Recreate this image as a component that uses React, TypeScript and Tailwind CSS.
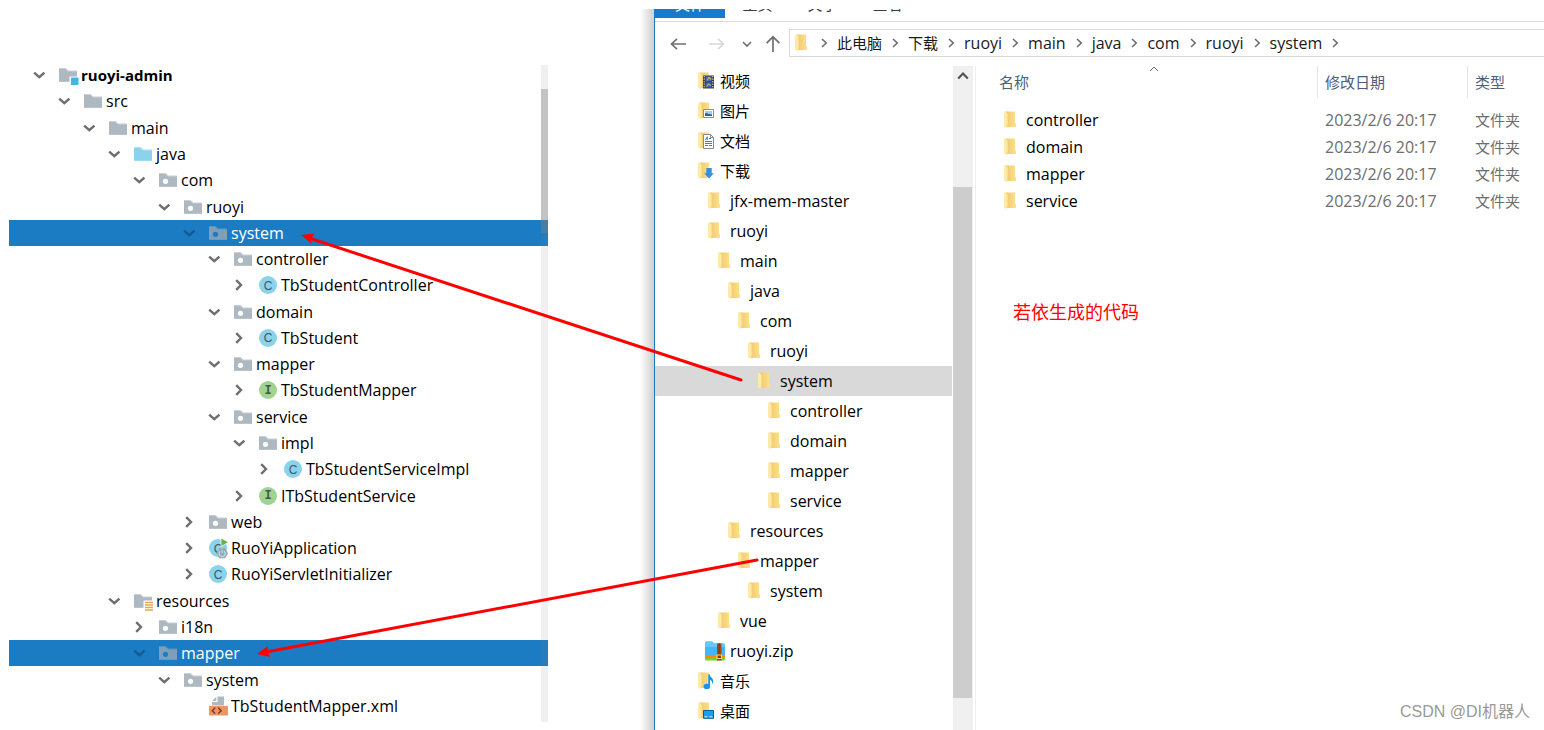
import React from "react";

type IdeIcon = "module" | "folder" | "source" | "package" | "class" | "interface" | "app" | "resources" | "xml";
type IdeNode = { label: string; depth: number; icon: IdeIcon; open?: boolean; leaf?: boolean; selected?: boolean };

const ideNodes: IdeNode[] = [
  { label: "ruoyi-admin", depth: 0, icon: "module", open: true },
  { label: "src", depth: 1, icon: "folder", open: true },
  { label: "main", depth: 2, icon: "folder", open: true },
  { label: "java", depth: 3, icon: "source", open: true },
  { label: "com", depth: 4, icon: "package", open: true },
  { label: "ruoyi", depth: 5, icon: "package", open: true },
  { label: "system", depth: 6, icon: "package", open: true, selected: true },
  { label: "controller", depth: 7, icon: "package", open: true },
  { label: "TbStudentController", depth: 8, icon: "class" },
  { label: "domain", depth: 7, icon: "package", open: true },
  { label: "TbStudent", depth: 8, icon: "class" },
  { label: "mapper", depth: 7, icon: "package", open: true },
  { label: "TbStudentMapper", depth: 8, icon: "interface" },
  { label: "service", depth: 7, icon: "package", open: true },
  { label: "impl", depth: 8, icon: "package", open: true },
  { label: "TbStudentServiceImpl", depth: 9, icon: "class" },
  { label: "ITbStudentService", depth: 8, icon: "interface" },
  { label: "web", depth: 6, icon: "package" },
  { label: "RuoYiApplication", depth: 6, icon: "app" },
  { label: "RuoYiServletInitializer", depth: 6, icon: "class" },
  { label: "resources", depth: 3, icon: "resources", open: true },
  { label: "i18n", depth: 4, icon: "package" },
  { label: "mapper", depth: 4, icon: "package", open: true, selected: true },
  { label: "system", depth: 5, icon: "package", open: true },
  { label: "TbStudentMapper.xml", depth: 6, icon: "xml", leaf: true },
];

type NavIcon = "folder" | "video" | "picture" | "document" | "download" | "zip" | "music" | "desktop";
type NavNode = { label: string; depth: number; icon: NavIcon; selected?: boolean };

const navNodes: NavNode[] = [
  { label: "视频", depth: 0, icon: "video" },
  { label: "图片", depth: 0, icon: "picture" },
  { label: "文档", depth: 0, icon: "document" },
  { label: "下载", depth: 0, icon: "download" },
  { label: "jfx-mem-master", depth: 1, icon: "folder" },
  { label: "ruoyi", depth: 1, icon: "folder" },
  { label: "main", depth: 2, icon: "folder" },
  { label: "java", depth: 3, icon: "folder" },
  { label: "com", depth: 4, icon: "folder" },
  { label: "ruoyi", depth: 5, icon: "folder" },
  { label: "system", depth: 6, icon: "folder", selected: true },
  { label: "controller", depth: 7, icon: "folder" },
  { label: "domain", depth: 7, icon: "folder" },
  { label: "mapper", depth: 7, icon: "folder" },
  { label: "service", depth: 7, icon: "folder" },
  { label: "resources", depth: 3, icon: "folder" },
  { label: "mapper", depth: 4, icon: "folder" },
  { label: "system", depth: 5, icon: "folder" },
  { label: "vue", depth: 2, icon: "folder" },
  { label: "ruoyi.zip", depth: 1, icon: "zip" },
  { label: "音乐", depth: 0, icon: "music" },
  { label: "桌面", depth: 0, icon: "desktop" },
];

const crumbs = ["此电脑", "下载", "ruoyi", "main", "java", "com", "ruoyi", "system"];
const files = ["controller", "domain", "mapper", "service"];

/** Latin labels are set one step larger than the Chinese ones. */
function labelSize(text: string) {
  return /^[\x00-\x7f]+$/.test(text) ? "text-base leading-5" : "text-[15px] leading-5";
}

function TreeChevron({ open, selected }: { open?: boolean; selected?: boolean }) {
  const color = selected ? "#125a91" : "#6e6e6e";
  return (
    <svg width="12" height="12" viewBox="0 0 12 12" fill="none" stroke={color} strokeWidth="2.4" aria-hidden="true">
      <path d={open ? "M1.2 3.6L6.3 8.2L11.4 3.6" : "M3.2 1.2L8 6L3.2 10.8"} />
    </svg>
  );
}

function IdeFolder({ icon, selected }: { icon: IdeIcon; selected?: boolean }) {
  const base = icon === "source" ? "#8bd3ec" : selected ? "#7f9fb8" : "#adb8c0";
  return (
    <svg width="20" height="20" viewBox="0 0 20 20" className="shrink-0" aria-hidden="true">
      <path d="M0 3H6.6L9.4 5.6H18V17H0Z" fill={base} opacity="0.65" />
      <path d="M0 4H6L8.8 6.4H18V16.4H0Z" fill={base} />
      {icon === "package" && <circle cx="6.5" cy="11.3" r="2.6" fill={selected ? "#1b7cc4" : "#ffffff"} />}
      {icon === "module" && (
        <>
          <path d="M10.5 11.5H20V20H10.5Z" fill="#ffffff" />
          <path d="M12 12.5H19.5V20H12Z" fill="#40b6e0" />
        </>
      )}
      {icon === "resources" && (
        <>
          <path d="M9.5 9.5H20V20H9.5Z" fill="#ffffff" />
          <path d="M11 11.5H19M11 14H19M11 16.5H19M11 19H19" stroke="#e5a84a" strokeWidth="1.5" />
        </>
      )}
    </svg>
  );
}

function TypeBadge({ icon }: { icon: IdeIcon }) {
  const tone = icon === "interface" ? "bg-[#a0d48d]" : "bg-[#8bd3ec]";
  return (
    <span className="relative flex w-5 shrink-0">
      <span
        className={`flex size-[18px] items-center justify-center rounded-full pt-px text-xs leading-none text-[#435560] ${tone} ${
          icon === "interface" ? "font-['Liberation_Mono',monospace] font-bold" : "font-['Liberation_Sans',sans-serif]"
        }`}
      >
        {icon === "interface" ? "I" : "C"}
      </span>
      {icon === "app" && (
        <svg className="absolute top-0 left-0 overflow-visible" width="20" height="20" viewBox="0 0 20 20" aria-hidden="true">
          <path d="M11.6 -1.6V8.2L19.6 3.2Z" fill="#ffffff" />
          <path d="M12.4 -0.6V7L18.8 3.2Z" fill="#62b543" />
          <path d="M10.3 9.2H16.1L19 14.2L16.1 19.2H10.3L7.4 14.2Z" fill="#9aa7b0" />
          <path d="M11.2 12.3A3 3 0 1 0 15.2 12.3M13.2 10.8V14" fill="none" stroke="#b9e2f1" strokeWidth="1.2" />
        </svg>
      )}
    </span>
  );
}

function XmlIcon() {
  return (
    <svg width="20" height="20" viewBox="0 0 20 20" className="shrink-0" aria-hidden="true">
      <path d="M8.5 0.5H15V9.5H3V6H8.5Z" fill="#adb8c0" />
      <path d="M7.3 0.8V5H3.1Z" fill="#adb8c0" />
      <path d="M0 10H19V19.5H0Z" fill="#f49362" />
      <path d="M6.2 11.8L3.2 14.7L6.2 17.6M9.2 11.8L12.2 14.7L9.2 17.6" fill="none" stroke="#5b3a29" strokeWidth="1.3" />
    </svg>
  );
}

function IdeTree() {
  return (
    <nav aria-label="Project" className="relative flex flex-1 pb-[11px] pt-[62px]">
      <ul className="grid flex-1 auto-rows-fr">
        {ideNodes.map((n, i) => (
          <li key={i} className="flex">
            <button
              type="button"
              className={`flex flex-1 items-center text-left text-base leading-5 ${
                n.selected ? "bg-[#1b7cc4] text-white" : "text-black"
              }`}
              style={{ paddingLeft: 24 + n.depth * 25 }}
            >
              <span className="mr-[14px] flex w-3 shrink-0">
                {!n.leaf && <TreeChevron open={n.open} selected={n.selected} />}
              </span>
              {n.icon === "class" || n.icon === "interface" || n.icon === "app" ? (
                <TypeBadge icon={n.icon} />
              ) : n.icon === "xml" ? (
                <XmlIcon />
              ) : (
                <IdeFolder icon={n.icon} selected={n.selected} />
              )}
              <span className={`ml-0.5 whitespace-nowrap ${n.icon === "module" ? "text-[15px] font-bold" : ""}`}>{n.label}</span>
            </button>
          </li>
        ))}
      </ul>
      <div className="absolute top-[65px] right-0 bottom-2 w-[7px] bg-[#808080]/12">
        <div className="mt-6 h-36 bg-[#808080]/40" />
      </div>
    </nav>
  );
}

function YellowFolder({ icon }: { icon: NavIcon }) {
  if (icon === "zip") {
    return (
      <svg width="20" height="20" viewBox="0 0 20 20" className="-mr-px -ml-[3px] shrink-0" aria-hidden="true">
        <path d="M0 2Q0 0.5 1.5 0.5H7L9.5 2.5H18.5Q20 2.5 20 4V15H0Z" fill="#49b3f5" />
        <path d="M0 2Q0 0.5 1.5 0.5H7L9.5 2.5H18.5Q20 2.5 20 4V6H0Z" fill="#64c8fa" />
        <path d="M0 14H20V17H0Z" fill="#ff8a00" />
        <path d="M0 17H20V18Q20 19.5 18.5 19.5H1.5Q0 19.5 0 18Z" fill="#79cf2b" />
        <path d="M12 2.5H16.5V19.5H12Z" fill="#a24b10" />
        <path d="M14.2 2.5V13" stroke="#613011" strokeWidth="1.3" strokeDasharray="1 1" />
        <path d="M12 14H16.5V17.5H12Z" fill="#7a3910" stroke="#ffd36b" strokeWidth="1.2" />
      </svg>
    );
  }
  return (
    <svg width="16" height="18" viewBox="0 0 16 18" className="shrink-0" aria-hidden="true">
      <defs>
        <linearGradient id="folderBack" x1="0" x2="1">
          <stop offset="0" stopColor="#ecc768" />
          <stop offset="1" stopColor="#ffe08a" />
        </linearGradient>
      </defs>
      <path d="M0.5 0.5H11V12L12 12.5V16H3V2Z" fill="url(#folderBack)" />
      <path d="M0 0.5L3.6 2.8V13.6L2.6 17.3L0 15.6Z" fill="#ffe9a8" />
      {icon === "video" && (
        <>
          <path d="M5 3.5H16V16.5H5Z" fill="#3b3b3b" />
          <path d="M7.5 4.5H13.5V9.3H7.5Z" fill="#3c6fd0" />
          <path d="M7.5 10.3H13.5V15.5H7.5Z" fill="#2f63c4" />
          <path d="M9 8.5L11 5.5L13.3 7.5M8.5 14.6L10.5 12L13 13.6" fill="none" stroke="#e2a34a" strokeWidth="1.2" />
          <path d="M6.2 4V16M14.8 4V16" stroke="#e6e6e6" strokeWidth="1" strokeDasharray="1.3 1.2" />
        </>
      )}
      {icon === "picture" && (
        <>
          <path d="M5.5 7.5H15.5V15.5H5.5Z" fill="#ffffff" stroke="#8e8e8e" />
          <path d="M7 9H14V14H7Z" fill="#9dccf5" />
          <path d="M7 11.5Q9 10.5 10.5 12L14 12.5V14H7Z" fill="#2c6388" />
        </>
      )}
      {icon === "document" && (
        <>
          <path d="M5.5 2.5H12.5L15.5 5.5V16.5H5.5Z" fill="#ffffff" stroke="#8a8a8a" />
          <path d="M12.5 2.5V5.5H15.5" fill="none" stroke="#8a8a8a" />
          <path d="M7.5 8L9.3 4.8V8M11 6.5H13M7 9.5H14M7 11.5H14M7 13.5H10M11 13.5H14" fill="none" stroke="#2186d0" />
        </>
      )}
      {icon === "download" && <path d="M8.3 6H13.7V11.2H15.8L11 16.4L6.2 11.2H8.3Z" fill="#338fe0" />}
      {icon === "music" && (
        <>
          <path d="M11.2 2.5V14" stroke="#0e96ea" strokeWidth="1.8" />
          <path d="M11 2C11.3 5.2 15.6 5.8 15.2 9.5Q15 11 14 12Q14.6 8.2 11 7.5Z" fill="#0e96ea" />
          <ellipse cx="8.8" cy="14.4" rx="3.2" ry="2.6" fill="#0e96ea" />
        </>
      )}
      {icon === "desktop" && (
        <>
          <path d="M5.5 8.5H15.5V16.3H5.5Z" fill="#14a0f5" stroke="#075a96" />
          <path d="M6.5 14.8H14.5" stroke="#d9efff" strokeDasharray="3 2" />
        </>
      )}
    </svg>
  );
}

function ThinChevron({ kind, size = 10, color = "#6d6d6d", width = 1.6 }: { kind: "right" | "down" | "up"; size?: number; color?: string; width?: number }) {
  const d = kind === "right" ? "M3 1L7.2 5L3 9" : kind === "down" ? "M1 3L5 7L9 3" : "M1 7L5 3L9 7";
  return (
    <svg width={size} height={size} viewBox="0 0 10 10" fill="none" stroke={color} strokeWidth={width} className="shrink-0" aria-hidden="true">
      <path d={d} />
    </svg>
  );
}

function NavArrow({ kind, color }: { kind: "left" | "right" | "up"; color: string }) {
  const d =
    kind === "left" ? "M16 9H1.5M7 3.8L1.5 9L7 14.2" : kind === "right" ? "M1 9H15.5M10 3.8L15.5 9L10 14.2" : "M9 17V1.8M2.6 8.2L9 1.8L15.4 8.2";
  return (
    <svg width="18" height="18" viewBox="0 0 18 18" fill="none" stroke={color} strokeWidth="1.7" aria-hidden="true">
      <path d={d} />
    </svg>
  );
}

function AddressBar() {
  return (
    <div className="flex h-11 items-center pl-[15px]">
      <button type="button" aria-label="Back" className="mr-5"><NavArrow kind="left" color="#707070" /></button>
      <button type="button" aria-label="Forward" className="mr-4"><NavArrow kind="right" color="#d8d8d8" /></button>
      <button type="button" aria-label="Recent" className="mr-3"><ThinChevron kind="down" /></button>
      <button type="button" aria-label="Up" className="mr-[7px]"><NavArrow kind="up" color="#707070" /></button>
      <div className="-mt-0.5 flex h-7 flex-1 items-center border-y border-l border-[#d9d9d9] pl-[5px]">
        <YellowFolder icon="folder" />
        <ol className="flex items-center">
          {crumbs.map((c, i) => (
            <li key={i} className="flex items-center">
              <span className="flex w-[26px] justify-center"><ThinChevron kind="right" /></span>
              <button type="button" className={`text-[#1a1a1a] ${labelSize(c)}`}>{c}</button>
            </li>
          ))}
          <li className="flex w-[26px] justify-center"><ThinChevron kind="right" /></li>
        </ol>
      </div>
    </div>
  );
}

function FileTable() {
  return (
    <table className="w-full table-fixed border-collapse text-left text-[15px] leading-5">
      <colgroup>
        <col className="w-[342px]" />
        <col className="w-[150px]" />
        <col />
      </colgroup>
      <thead>
        <tr className="text-[#4c607a]">
          <th className="p-0 pb-2 font-normal">
            <div className="relative flex h-8 items-center border-r border-[#e5e5e5] pl-[23px]">
              名称
              <span className="absolute -top-0.5 left-[173px]"><ThinChevron kind="up" width={1} /></span>
            </div>
          </th>
          <th className="p-0 pb-2 font-normal">
            <div className="flex h-8 items-center border-r border-[#e5e5e5] pl-[7px]">修改日期</div>
          </th>
          <th className="p-0 pb-2 font-normal">
            <div className="flex h-8 items-center pl-[7px]">类型</div>
          </th>
        </tr>
      </thead>
      <tbody>
        {files.map((f) => (
          <tr key={f} className="h-[27px]">
            <td className="p-0">
              <span className="flex items-center gap-[6px] pl-7">
                <YellowFolder icon="folder" />
                <span className="text-base leading-5 text-black">{f}</span>
              </span>
            </td>
            <td className="p-0 pl-[7px] text-base leading-5 text-[#6d6d6d]">2023/2/6 20:17</td>
            <td className="p-0 pl-[7px] text-[#6d6d6d]">文件夹</td>
          </tr>
        ))}
      </tbody>
    </table>
  );
}

function Explorer() {
  return (
    <section className="mt-[9px] flex min-w-0 flex-1 flex-col border-l border-[#1979ca] bg-white">
      <div className="h-[13px] border-b border-[#dadbdc]">
        <div className="flex h-[9px] items-end overflow-hidden text-[15px] leading-7 text-[#3b3b3b]">
          <button type="button" className="w-[70px] bg-[#1979ca] text-center text-white">文件</button>
          <button type="button" className="w-[65px] text-center">主页</button>
          <button type="button" className="w-[65px] text-center">关于</button>
          <button type="button" className="w-[65px] text-center">查看</button>
        </div>
      </div>
      <AddressBar />
      <div className="flex flex-1">
        <nav aria-label="Folders" className="w-[297px] shrink-0">
          <ul>
            {navNodes.map((n, i) => (
              <li key={i}>
                <button
                  type="button"
                  className={`flex h-[30px] w-full items-center gap-[6px] text-left text-black ${labelSize(n.label)} ${n.selected ? "bg-[#d9d9d9]" : ""}`}
                  style={{ paddingLeft: 43 + n.depth * 10 }}
                >
                  <YellowFolder icon={n.icon} />
                  <span>{n.label}</span>
                </button>
              </li>
            ))}
          </ul>
        </nav>
        <div className="ml-px flex w-5 shrink-0 flex-col bg-[#f0f0f0]">
          <button type="button" aria-label="Scroll up" className="flex h-5 items-center justify-center">
            <ThinChevron kind="up" size={12} color="#505050" width={1.8} />
          </button>
          <div className="mt-[101px] mr-px h-[511px] bg-[#cdcdcd]" />
        </div>
        <div className="ml-0.5 min-w-0 flex-1 border-l border-[#f0f0f0]">
          <FileTable />
          <p className="pt-[84px] pl-[37px] text-lg leading-7 text-[#f00]">若依生成的代码</p>
        </div>
      </div>
    </section>
  );
}

function ArrowOverlay() {
  return (
    <svg className="pointer-events-none absolute top-0 left-0" width="780" height="700" viewBox="0 0 780 700" aria-hidden="true">
      <g stroke="#ff0000" strokeWidth="3" strokeLinecap="round">
        <path d="M741 380L309 238" />
        <path d="M757 560L266 652" />
      </g>
      <path d="M301 235L314.4 233.4L311 239L311.6 243.5Z" fill="#ff0000" />
      <path d="M257 654L268 646L267.6 651.7L270 657Z" fill="#ff0000" />
    </svg>
  );
}

export default function App() {
  return (
    <main className="relative flex min-h-screen overflow-hidden bg-white font-['Open_Sans','Noto_Sans_CJK_SC',sans-serif]">
      <div className="flex w-[640px] shrink-0 pr-[92px] pl-[9px]">
        <IdeTree />
      </div>
      <div className="mt-[9px] w-[14px] shrink-0 bg-linear-to-r from-white to-[#cfcfcf]" />
      <Explorer />
      <ArrowOverlay />
      <p className="absolute right-3.5 bottom-2 font-['Liberation_Sans','Noto_Sans_CJK_SC',sans-serif] text-base leading-5 text-[#999999]">
        CSDN @DI机器人
      </p>
    </main>
  );
}
